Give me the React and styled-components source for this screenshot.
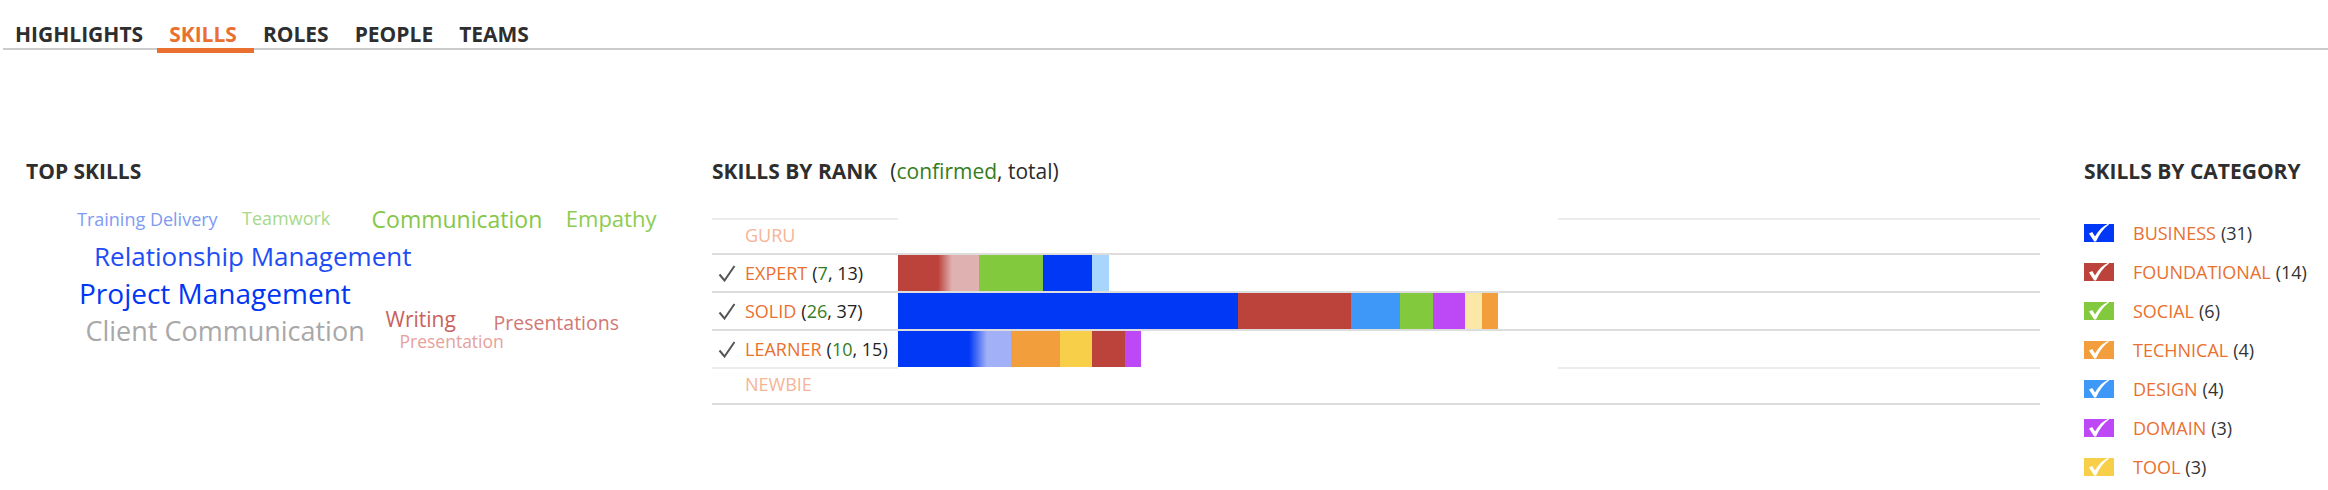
import React from "react";
import styled, { createGlobalStyle } from "styled-components";

const GlobalStyle = createGlobalStyle`
  html, body {
    margin: 0;
    padding: 0;
    background: #fff;
  }
  body {
    font-family: "Open Sans", "Liberation Sans", sans-serif;
    color: #333;
  }
`;

const ORANGE = "#e9702f";

const tabs = ["HIGHLIGHTS", "SKILLS", "ROLES", "PEOPLE", "TEAMS"];

const cloud = [
  { text: "Training Delivery", x: 51, y: 24.5, size: 18, color: "#7d9bf4" },
  { text: "Teamwork", x: 216, y: 24, size: 18, color: "#a7d98a" },
  { text: "Communication", x: 345.6, y: 22.9, size: 23, color: "#86c748" },
  { text: "Empathy", x: 539.8, y: 21.8, size: 22, color: "#8ccc52" },
  { text: "Relationship Management", x: 68, y: 58, size: 26, color: "#1e4cf5" },
  { text: "Project Management", x: 53, y: 93.5, size: 28, color: "#0036f4" },
  { text: "Client Communication", x: 59.4, y: 132, size: 27, color: "#a8a8a8" },
  { text: "Writing", x: 359.5, y: 124.3, size: 21, color: "#c9615b" },
  { text: "Presentations", x: 467.5, y: 128.4, size: 19.5, color: "#d27874" },
  { text: "Presentation", x: 373.5, y: 147.8, size: 17.5, color: "#e6a19c" },
];

const C = {
  blue: "#0038f5",
  red: "#bb433b",
  green: "#83c93e",
  orange: "#f39e3c",
  sky: "#3e98f7",
  purple: "#bd48f6",
  yellow: "#f7cf48",
};

const ranks = [
  { name: "GURU", muted: true, edge: true, h: 29 },
  {
    name: "EXPERT",
    confirmed: 7,
    total: 13,
    bars: [
      { w: 40, bg: C.red },
      { w: 41, bg: `linear-gradient(to right, ${C.red} 0, #e0b1b1 14px)` },
      { w: 64, bg: C.green },
      { w: 49, bg: C.blue },
      { w: 17, bg: "#a7d5fb" },
    ],
  },
  {
    name: "SOLID",
    confirmed: 26,
    total: 37,
    bars: [
      { w: 340, bg: C.blue },
      { w: 113, bg: C.red },
      { w: 49, bg: C.sky },
      { w: 33, bg: C.green },
      { w: 32, bg: C.purple },
      { w: 17, bg: "#fbe8a6" },
      { w: 16, bg: C.orange },
    ],
  },
  {
    name: "LEARNER",
    confirmed: 10,
    total: 15,
    last: true,
    bars: [
      { w: 71, bg: C.blue },
      { w: 42, bg: `linear-gradient(to right, ${C.blue} 0, #a2b1f7 18px)` },
      { w: 49, bg: C.orange },
      { w: 32, bg: C.yellow },
      { w: 33, bg: C.red },
      { w: 16, bg: C.purple },
    ],
  },
  { name: "NEWBIE", muted: true, edge: true, h: 30 },
];

const categories = [
  { name: "BUSINESS", count: 31, color: C.blue },
  { name: "FOUNDATIONAL", count: 14, color: C.red },
  { name: "SOCIAL", count: 6, color: C.green },
  { name: "TECHNICAL", count: 4, color: C.orange },
  { name: "DESIGN", count: 4, color: C.sky },
  { name: "DOMAIN", count: 3, color: C.purple },
  { name: "TOOL", count: 3, color: C.yellow },
];

const Page = styled.div`
  width: 2328px;
`;

const Nav = styled.nav`
  display: flex;
  margin-left: 3px;
  padding-top: 21px;
  border-bottom: 2px solid #cccccc;
`;

const Tab = styled.div`
  position: relative;
  padding: 0 14px 0 12px;
  font-size: 21px;
  font-weight: 700;
  line-height: 27px;
  color: ${(p) => (p.$active ? ORANGE : "#2e2e2e")};

  &::after {
    content: "";
    display: ${(p) => (p.$active ? "block" : "none")};
    position: absolute;
    left: 0;
    right: -3px;
    top: 100%;
    height: 5px;
    background: ${ORANGE};
  }
`;

const Main = styled.main`
  display: grid;
  grid-template-columns: 712px 1328px 1fr;
  padding-top: 108px;
`;

const Column = styled.section`
  padding-left: ${(p) => p.$pad || 0}px;
`;

const Title = styled.h2`
  margin: 0;
  font-size: 21px;
  font-weight: 700;
  line-height: 27px;
  color: #2e2e2e;
  display: flex;
  align-items: baseline;
`;

const Sub = styled.span`
  margin-left: 13px;
  font-size: 21px;
  font-weight: 400;
  color: #2a2a2a;
`;

const Green = styled.span`
  color: #357d22;
`;

const Cloud = styled.div`
  position: relative;
  height: 180px;
`;

const Word = styled.span`
  position: absolute;
  white-space: nowrap;
  line-height: 1;
  left: ${(p) => p.$x}px;
  top: ${(p) => p.$y}px;
  font-size: ${(p) => p.$size}px;
  color: ${(p) => p.$color};
`;

const Table = styled.div`
  margin-top: 33px;
`;

const Row = styled.div`
  display: grid;
  grid-template-columns: 186px 660px 1fr;
  border-bottom: ${(p) => (p.$line ? "2px solid #dddddd" : "none")};
`;

const LabelCell = styled.div`
  display: flex;
  align-items: center;
  border-top: ${(p) => (p.$edge ? "2px solid #ececec" : "none")};
  height: ${(p) => p.$h || 36}px;
  padding-bottom: ${(p) => (p.$edge ? 4 : 0)}px;
  font-size: 18px;
  color: #222;
  white-space: nowrap;
`;

const RestCell = styled.div`
  border-top: ${(p) => (p.$edge ? "2px solid #ececec" : "none")};
`;

const CheckMark = styled.span`
  display: inline-flex;
  width: 27px;
  padding-left: 6px;
  flex-shrink: 0;
`;

const RankName = styled.span`
  color: ${(p) => (p.$muted ? "#f6b496" : ORANGE)};
  margin-right: 5px;
`;

const BarCell = styled.div`
  display: flex;
`;

const Segment = styled.div`
  height: 36px;
  flex-shrink: 0;
`;

const Legend = styled.ul`
  list-style: none;
  margin: 28px 0 0;
  padding: 0;
`;

const LegendItem = styled.li`
  display: flex;
  align-items: center;
  height: 39px;
  font-size: 18px;
  color: #333;
`;

const Swatch = styled.span`
  position: relative;
  width: 30px;
  height: 18px;
  flex-shrink: 0;
  margin-right: 19px;
  background: ${(p) => p.$color};

  svg {
    position: absolute;
    left: 0;
    top: 0;
    overflow: visible;
  }
`;

const CatName = styled.span`
  color: ${ORANGE};
  margin-right: 5px;
`;

const Tick = () => (
  <svg width="18" height="17" viewBox="0 0 18 17">
    <path d="M1.5 9.5 L6.5 15.5 L16.5 1" fill="none" stroke="#555" strokeWidth="2" />
  </svg>
);

const WhiteCheck = () => (
  <svg width="30" height="18" viewBox="0 0 30 18">
    <path
      d="M5 9.6 L8.2 8 L11 12.6 C14.5 6.2 19 1.8 24.6 -0.6 L25 0.4 C19.6 4.2 15.2 10.2 12 17.6 L10.2 17.6 Z"
      fill="#fff"
    />
  </svg>
);

const App = () => {
  return (
    <Page>
      <GlobalStyle />
      <Nav>
        {tabs.map((t) => (
          <Tab key={t} $active={t === "SKILLS"}>
            {t}
          </Tab>
        ))}
      </Nav>
      <Main>
        <Column $pad={26}>
          <Title>TOP SKILLS</Title>
          <Cloud>
            {cloud.map((w) => (
              <Word key={w.text} $x={w.x} $y={w.y} $size={w.size} $color={w.color}>
                {w.text}
              </Word>
            ))}
          </Cloud>
        </Column>

        <Column>
          <Title>
            SKILLS BY RANK
            <Sub>
              (<Green>confirmed</Green>, total)
            </Sub>
          </Title>
          <Table>
            {ranks.map((r) => (
              <Row key={r.name} $line={!r.last}>
                <LabelCell $edge={r.edge} $h={r.h}>
                  <CheckMark>{!r.muted && <Tick />}</CheckMark>
                  <RankName $muted={r.muted}>{r.name}</RankName>
                  {!r.muted && (
                    <span>
                      (<Green>{r.confirmed}</Green>, {r.total})
                    </span>
                  )}
                </LabelCell>
                <BarCell>
                  {(r.bars || []).map((b, i) => (
                    <Segment key={i} style={{ width: b.w, background: b.bg }} />
                  ))}
                </BarCell>
                <RestCell $edge={r.edge} />
              </Row>
            ))}
          </Table>
        </Column>

        <Column $pad={44}>
          <Title>SKILLS BY CATEGORY</Title>
          <Legend>
            {categories.map((c) => (
              <LegendItem key={c.name}>
                <Swatch $color={c.color}>
                  <WhiteCheck />
                </Swatch>
                <CatName>{c.name}</CatName>({c.count})
              </LegendItem>
            ))}
          </Legend>
        </Column>
      </Main>
    </Page>
  );
};

export default App;
